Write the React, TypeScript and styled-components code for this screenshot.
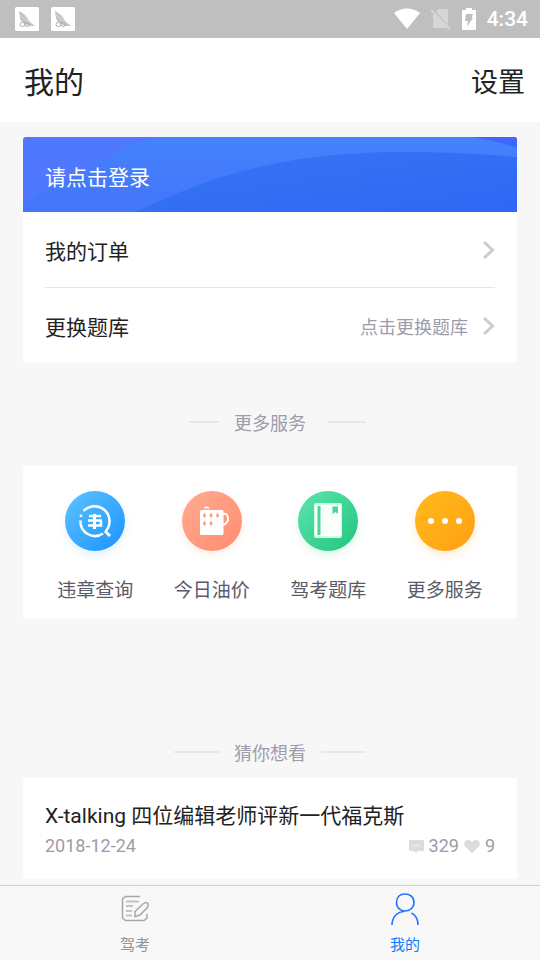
import React from 'react';
import styled, { createGlobalStyle } from 'styled-components';

const GlobalStyle = createGlobalStyle`
  * { box-sizing: border-box; }
  body {
    margin: 0;
    background: #f7f7f7;
    color: #222;
    font-family: Roboto, "Noto Sans CJK SC", sans-serif;
  }
  button { font: inherit; color: inherit; background: none; border: 0; padding: 0; cursor: pointer; }
  a { color: inherit; text-decoration: none; }
  h1, h2, h3, p, ul { margin: 0; padding: 0; font-weight: 400; list-style: none; }
  svg { display: block; flex: none; }
`;

const Page = styled.div`
  min-height: 100vh;
  display: flex;
  flex-direction: column;
`;

const StatusBar = styled.div`
  display: flex;
  align-items: center;
  justify-content: space-between;
  height: 38px;
  padding: 0 12px 0 15px;
  background: #bfbfbf;
  color: #fff;
`;

const StatusGroup = styled.div<{ $gap: number }>`
  display: flex;
  align-items: center;
  gap: ${(p) => p.$gap}px;
`;

const Clock = styled.span`
  font-size: 21px;
  font-weight: 500;
  line-height: 24px;
`;

const Header = styled.header`
  display: flex;
  align-items: center;
  justify-content: space-between;
  height: 84px;
  padding: 5px 15px 0 24px;
  background: #fff;
`;

const Title = styled.h1`
  font-size: 30px;
  line-height: 44px;
`;

const SettingsButton = styled.button`
  font-size: 27px;
  line-height: 40px;
`;

const Main = styled.main`
  flex: 1;
  padding: 15px 23px 6px;
`;

const Card = styled.section`
  overflow: hidden;
  border-radius: 3px;
  background: #fff;
`;

const LoginButton = styled.button`
  position: relative;
  display: flex;
  align-items: center;
  width: 100%;
  height: 75px;
  padding: 7px 22px 0;
  color: #fff;
  font-size: 21px;
  line-height: 30px;
`;

const BannerArt = styled.svg`
  position: absolute;
  inset: 0;
  width: 100%;
  height: 100%;
`;

const BannerText = styled.span`
  position: relative;
`;

const MenuList = styled.ul`
  padding: 0 22px;
`;

const MenuItem = styled.li`
  & + & { border-top: 1px solid #e4e4e4; }
`;

const MenuLink = styled.a`
  display: flex;
  align-items: center;
  height: 75px;
  padding-top: 5px;
  font-size: 21px;
  line-height: 30px;
`;

const MenuHint = styled.span`
  margin-left: auto;
  color: #9c9caa;
  font-size: 18px;
  line-height: 26px;
`;

const MenuArrow = styled.svg`
  margin: 0 0 5px 15px;
  &:nth-child(2) { margin-left: auto; }
`;

const Divider = styled.div<{ $top: number; $bottom: number }>`
  display: grid;
  grid-template-columns: 1fr auto 1fr;
  align-items: center;
  padding: ${(p) => p.$top}px 0 ${(p) => p.$bottom}px;
`;

const DividerText = styled.h2`
  color: #9c9caa;
  font-size: 18px;
  line-height: 26px;
`;

const DividerLine = styled.span<{ $width: number; $side: 'left' | 'right'; $gap: number }>`
  justify-self: ${(p) => (p.$side === 'left' ? 'end' : 'start')};
  width: ${(p) => p.$width}px;
  height: 2px;
  margin: ${(p) => (p.$side === 'left' ? `0 ${p.$gap}px 5px 0` : `0 0 5px ${p.$gap}px`)};
  background: #e8e8e8;
`;

const ServiceGrid = styled.ul`
  display: grid;
  grid-template-columns: repeat(4, 1fr);
  padding: 25px 14px 13px;
`;

const ServiceLink = styled.a`
  display: flex;
  flex-direction: column;
  align-items: center;
  gap: 25px;
  color: #5a5a68;
  font-size: 19px;
  line-height: 30px;
`;

const ServiceBadge = styled.span<{ $from: string; $to: string; $glow: string }>`
  display: grid;
  place-items: center;
  width: 60px;
  height: 60px;
  border-radius: 50%;
  background: linear-gradient(135deg, ${(p) => p.$from}, ${(p) => p.$to});
  box-shadow: 0 4px 9px ${(p) => p.$glow};
`;

const Article = styled.a`
  display: block;
  padding: 22px 22px 19px;
`;

const ArticleTitle = styled.h3`
  font-size: 21px;
  line-height: 32px;
`;

const ArticleMeta = styled.div`
  display: flex;
  justify-content: space-between;
  color: #9c9caa;
  font-size: 18px;
  line-height: 28px;
`;

const Stats = styled.span`
  display: flex;
  align-items: center;
  gap: 5px;
`;

const TabBar = styled.nav`
  position: sticky;
  bottom: 0;
  display: grid;
  grid-template-columns: 1fr 1fr;
  height: 75px;
  border-top: 1px solid #cfcfcf;
  background: #f8f8f8;
`;

const Tab = styled.a<{ $active?: boolean }>`
  display: flex;
  flex-direction: column;
  align-items: center;
  gap: 8px;
  padding-top: 6px;
  color: ${(p) => (p.$active ? '#0b7bff' : '#929292')};
  font-size: 15px;
  line-height: 22px;
`;

const AppNotice = () => (
  <svg width="24" height="24" viewBox="0 0 24 24" aria-hidden="true">
    <rect width="24" height="24" rx="1.5" fill="#fff" />
    <path d="M4 4Q12 8 14 14L20 19H14L7 15L5 12Z" fill="#c4c4c4" />
    <path d="M5 8L13 15M9 7L16 17" stroke="#e4e4e4" strokeWidth=".6" />
    <ellipse cx="7.500" cy="17.500" rx="2.500" ry="2" fill="none" stroke="#b0b0b0" />
    <ellipse cx="12" cy="17.500" rx="2" ry="2" fill="none" stroke="#b0b0b0" />
  </svg>
);

const Wifi = () => (
  <svg width="26" height="22" viewBox="0 0 26 22" aria-hidden="true">
    <path d="M0 5C7-1 19-1 26 5L13 21Z" fill="#fff" />
  </svg>
);

const NoSim = () => (
  <svg width="20" height="22" viewBox="0 0 20 22" aria-hidden="true">
    <path d="M8 1h8q1 0 1 1v17q0 1-1 1H3q-1 0-1-1V7z" fill="#d6d6d6" />
    <path d="M1 1l19 20" stroke="#bfbfbf" strokeWidth="2" />
    <path d="M0 2l19 19" stroke="#d6d6d6" strokeWidth="2" />
  </svg>
);

const Battery = () => (
  <svg width="14" height="22" viewBox="0 0 14 22" aria-hidden="true">
    <path d="M4 0h6v2h3q1 0 1 1v18q0 1-1 1H1q-1 0-1-1V3q0-1 1-1h3z" fill="#fff" />
    <path d="M4 6h7L9.500 10H11L5 18.500L6 13H3Z" fill="#bfbfbf" />
  </svg>
);

const Arrow = () => (
  <MenuArrow width="12" height="18" viewBox="0 0 12 18" aria-hidden="true">
    <path d="M1 1l8.500 8L1 17" fill="none" stroke="#ccc" strokeWidth="3" />
  </MenuArrow>
);

const QueryIcon = () => (
  <svg width="36" height="36" viewBox="0 0 36 36" fill="none" stroke="#fff" aria-hidden="true">
    <path d="M6.500 8A14.500 14.500 0 1 1 28.500 28.500" strokeWidth="2.500" />
    <path d="M26 30.500A14.500 14.500 0 0 1 3.500 17.500M4 14v-2.500" strokeWidth="2.500" />
    <path d="M28 28l5 5" strokeWidth="3" />
    <path d="M12 13h12M11 17.500h14M11 22.500h13v-4" strokeWidth="2.500" />
    <path d="M17.500 11v15" strokeWidth="3" />
  </svg>
);

const FuelIcon = () => (
  <svg width="36" height="36" viewBox="0 0 36 36" aria-hidden="true">
    <path d="M10 5.500q0-2 2-2h1.500q2 0 2 2z" fill="#fff" />
    <rect x="6" y="7" width="23.500" height="25" rx="1.500" fill="#fff" />
    <path d="M29 11q5-1 5 5 0 4-5 6" fill="none" stroke="#fff" strokeWidth="2" />
    <path
      d="M10.500 9.500l1.500 3q0 2-1.500 2t-1.500-2zM17 9.500l1.500 3q0 2-1.500 2t-1.500-2zM23.500 9.500l1.500 3q0 2-1.500 2t-1.500-2zM10.500 17.500l1.500 3q0 2-1.500 2t-1.500-2zM17 17.500l1.500 3q0 2-1.500 2t-1.500-2z"
      fill="#ff9c80"
    />
  </svg>
);

const BookIcon = () => (
  <svg width="28" height="36" viewBox="0 0 28 36" aria-hidden="true">
    <rect x="0" y="0" width="28" height="35" rx="2" fill="#d3f8e6" />
    <rect x="1" y="2" width="26" height="31" rx="1" fill="#fafffc" />
    <path d="M3.500 3h3v29h-3z" fill="#48d799" />
    <path d="M18.500 3.500h5.500v7.500l-2.500-2-3 2z" fill="#48d799" />
  </svg>
);

const DotsIcon = () => (
  <svg width="36" height="8" viewBox="0 0 36 8" fill="#fff" aria-hidden="true">
    <circle cx="4" cy="4" r="3" />
    <circle cx="18" cy="4" r="3" />
    <circle cx="32" cy="4" r="3" />
  </svg>
);

const CommentIcon = () => (
  <svg width="15" height="15" viewBox="0 0 15 15" role="img" aria-label="评论">
    <path d="M1 1h13q1 0 1 1v9q0 1-1 1H9l-2 2-2-2H1q-1 0-1-1V2q0-1 1-1z" fill="#dcdcdc" />
    <path d="M3 6.500h9" stroke="#f4f4f4" strokeDasharray="2 1" />
  </svg>
);

const HeartIcon = () => (
  <svg width="16" height="15" viewBox="0 0 16 15" role="img" aria-label="点赞">
    <path d="M8 14L1 7.500C-1 4 1 1 4 1q3 0 4 2 1-2 4-2c3 0 5 3 3 6.500z" fill="#dcdcdc" />
  </svg>
);

const ExamIcon = () => (
  <svg width="28" height="34" viewBox="0 0 28 34" fill="none" stroke="#a6a6a6" aria-hidden="true">
    <path d="M19 4.500H4.500L1.500 7v19l3 2.500H23l3-2.500V22" strokeWidth="1.500" />
    <path d="M5 9.500h13M5 14h7M5 19h6M5 23.500h6" stroke="#c4c4c4" strokeWidth="2" />
    <path d="M14 24.500v-5l8-7.500q3-2.500 4.500-1t-.5 5L19 23z" strokeWidth="1.500" />
  </svg>
);

const PersonIcon = () => (
  <svg width="28" height="34" viewBox="0 0 28 34" fill="none" stroke="#2672ff" strokeWidth="1.600" aria-hidden="true">
    <path d="M14 2c-5 0-8.500 3-8.500 8.500S10 19 14 19s9-3 9-8.500S19 2 14 2zM1 33c0-8 5-13 12-13.500M20.500 21c4 2 6.500 7 6.500 12" />
  </svg>
);

const services = [
  { name: '违章查询', icon: <QueryIcon />, from: '#5cc4ff', to: '#1c92ff', glow: '#2f9fff26' },
  { name: '今日油价', icon: <FuelIcon />, from: '#ffac90', to: '#ff8b70', glow: '#ff8b7026' },
  { name: '驾考题库', icon: <BookIcon />, from: '#5ce4ae', to: '#20c67d', glow: '#20c67d26' },
  { name: '更多服务', icon: <DotsIcon />, from: '#ffbb1c', to: '#ff9f12', glow: '#ff9f1230' },
];

export default function App() {
  return (
    <Page>
      <GlobalStyle />
      <StatusBar>
        <StatusGroup $gap={12}>
          <AppNotice />
          <AppNotice />
        </StatusGroup>
        <StatusGroup $gap={11}>
          <Wifi />
          <NoSim />
          <Battery />
          <Clock>4:34</Clock>
        </StatusGroup>
      </StatusBar>
      <Header>
        <Title>我的</Title>
        <SettingsButton type="button">设置</SettingsButton>
      </Header>
      <Main>
        <Card>
          <LoginButton type="button">
            <BannerArt viewBox="0 0 494 75" preserveAspectRatio="none" aria-hidden="true">
              <defs>
                <linearGradient id="mid" x1="0" y1="0" x2="0" y2="1">
                  <stop offset="0" stopColor="#4482fc" />
                  <stop offset="1" stopColor="#4375fb" />
                </linearGradient>
                <linearGradient id="front" x1="0" y1="0" x2="1" y2="1">
                  <stop offset="0" stopColor="#3776f3" />
                  <stop offset="1" stopColor="#2f66f4" />
                </linearGradient>
              </defs>
              <path d="M0 0H494V75H0Z" fill="#4f78ff" />
              <path d="M0 66Q45 42 80 23Q105 8 132 0H494V75H0Z" fill="url(#mid)" />
              <path d="M113 75C190 38 260 15 383 15Q440 15 494 20V75Z" fill="url(#front)" />
              <path d="M449 0H494V11Q474 4 449 0Z" fill="#4165ff" />
            </BannerArt>
            <BannerText>请点击登录</BannerText>
          </LoginButton>
          <MenuList>
            <MenuItem>
              <MenuLink href="#orders">
                <span>我的订单</span>
                <Arrow />
              </MenuLink>
            </MenuItem>
            <MenuItem>
              <MenuLink href="#bank">
                <span>更换题库</span>
                <MenuHint>点击更换题库</MenuHint>
                <Arrow />
              </MenuLink>
            </MenuItem>
          </MenuList>
        </Card>

        <Divider $top={48} $bottom={29}>
          <DividerLine $side="left" $width={30} $gap={15} />
          <DividerText>更多服务</DividerText>
          <DividerLine $side="right" $width={38} $gap={22} />
        </Divider>
        <Card>
          <ServiceGrid>
            {services.map((s) => (
              <li key={s.name}>
                <ServiceLink href="#service">
                  <ServiceBadge $from={s.from} $to={s.to} $glow={s.glow}>{s.icon}</ServiceBadge>
                  <span>{s.name}</span>
                </ServiceLink>
              </li>
            ))}
          </ServiceGrid>
        </Card>

        <Divider $top={122} $bottom={11}>
          <DividerLine $side="left" $width={45} $gap={15} />
          <DividerText>猜你想看</DividerText>
          <DividerLine $side="right" $width={45} $gap={15} />
        </Divider>
        <Card>
          <Article href="#article">
            <ArticleTitle>X-talking 四位编辑老师评新一代福克斯</ArticleTitle>
            <ArticleMeta>
              <time dateTime="2018-12-24">2018-12-24</time>
              <Stats>
                <CommentIcon />
                <span>329</span>
                <HeartIcon />
                <span>9</span>
              </Stats>
            </ArticleMeta>
          </Article>
        </Card>
      </Main>
      <TabBar>
        <Tab href="#exam">
          <ExamIcon />
          <span>驾考</span>
        </Tab>
        <Tab href="#mine" $active aria-current="page">
          <PersonIcon />
          <span>我的</span>
        </Tab>
      </TabBar>
    </Page>
  );
}
